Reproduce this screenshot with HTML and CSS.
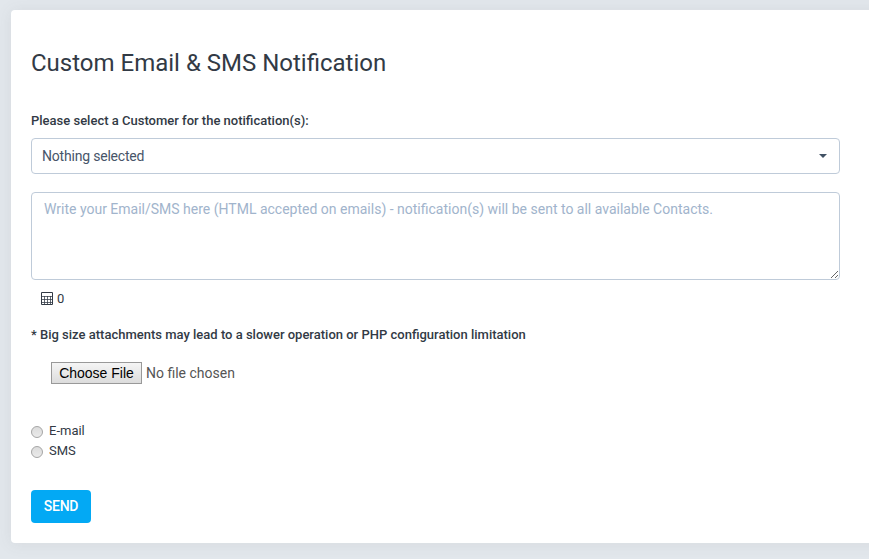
FILE: index.html
```html
<!DOCTYPE html>
<html lang="en">
<head>
<meta charset="utf-8">
<title>Custom Email &amp; SMS Notification</title>
<link rel="stylesheet" href="styles.css">
</head>
<body>
<main class="panel">
  <h1 class="title"><span>Custom Email &amp; SMS Notification</span></h1>
  <form class="form">
    <div class="label">Please select a Customer for the notification(s):</div>
    <button type="button" class="select"><span>Nothing selected</span><svg class="caret" width="8" height="4" viewBox="0 0 8 4"><path d="M0 0h8L4 4z"/></svg></button>
    <textarea class="message" placeholder="Write your Email/SMS here (HTML accepted on emails) - notification(s) will be sent to all available Contacts."></textarea>
    <div class="counter">
      <svg width="12" height="13" viewBox="0 0 12 13" fill="none" stroke="#323a45"><path d="M.5.5h11v12H.5z"/><path d="M0 4.5h12M0 7.5h12M0 10.5h12M3.5 4v8M6.5 4v8M9.5 4v8" stroke-opacity=".75"/></svg>
      <span>0</span>
    </div>
    <div class="label note">* Big size attachments may lead to a slower operation or PHP configuration limitation</div>
    <div class="file"><button type="button" class="file-button">Choose File</button><span class="file-name">No file chosen</span></div>
    <div class="options">
      <label class="option"><input type="radio" name="type" class="radio"><span>E-mail</span></label>
      <label class="option"><input type="radio" name="type" class="radio"><span>SMS</span></label>
    </div>
    <button type="button" class="send">SEND</button>
  </form>
</main>
</body>
</html>
```
FILE: styles.css
```css
* { box-sizing: border-box; }
body {
  margin: 0;
  height: 559px;
  overflow: hidden;
  padding: 10px 0 0 11px;
  background: #e2e7ec;
  font-family: Roboto, "Liberation Sans", sans-serif;
  font-size: 13px;
  color: #323a45;
  white-space: nowrap;
}
.panel {
  width: 878px;
  height: 533px;
  padding: 38px 40px 0 20px;
  background: #fff;
  border-radius: 4px;
  box-shadow: 0 1px 15px 1px rgba(90, 90, 90, .08);
}
.title {
  margin: 0 0 37px;
  font-size: 24px;
  line-height: 30px;
  font-weight: 400;
}
.form {
  display: flex;
  flex-direction: column;
  align-items: flex-start;
  width: 809px;
}
.label {
  height: 12px;
  margin-bottom: 11px;
  line-height: 12px;
  font-weight: 500;
}
.select {
  display: flex;
  justify-content: space-between;
  align-items: center;
  width: 100%;
  height: 36px;
  margin-bottom: 18px;
  padding: 0 12px 0 10px;
  border: 1px solid #bfcbd9;
  border-radius: 4px;
  background: #fff;
  color: #475569;
  font: 400 14px/20px Roboto, sans-serif;
  letter-spacing: -.2px;
}
.caret { fill: #415164; }
.message {
  width: 100%;
  height: 88px;
  padding: 6px 12px;
  border: 1px solid #bfcbd9;
  border-radius: 4px;
  background: #fff;
  font: 400 14px/20px Roboto, sans-serif;
  resize: vertical;
}
.message::placeholder { color: #a1b4cc; opacity: 1; }
.counter {
  display: flex;
  align-items: center;
  gap: 4px;
  height: 20px;
  margin: 8px 0 0 10px;
}
.note { margin: 21px 0 0; }
.file {
  display: flex;
  align-items: center;
  gap: 4px;
  margin: 21px 0 0 20px;
}
.file-button {
  width: 91px;
  height: 22px;
  padding: 0;
  border: 1px solid #999;
  border-radius: 0;
  background: linear-gradient(#f5f5f5, #dcdcdc);
  color: #000;
  font: 14px/20px "Liberation Sans", sans-serif;
}
.file-name { font-size: 14px; color: #555; }
.options { margin-top: 37px; }
.option {
  display: flex;
  gap: 6px;
  height: 20px;
  line-height: 20px;
}
.radio {
  appearance: none;
  width: 12px;
  height: 12px;
  margin: 5px 0 0;
  border: 1px solid #a5a5a5;
  border-radius: 50%;
  background: linear-gradient(#dcdcdc, #eaeaea);
}
.send {
  width: 60px;
  height: 33px;
  margin-top: 29px;
  padding: 0 0 1px;
  border: 0;
  border-radius: 4px;
  background: #03a9f4;
  color: #fff;
  font: 500 14px/20px Roboto, sans-serif;
  letter-spacing: -.3px;
}
```
